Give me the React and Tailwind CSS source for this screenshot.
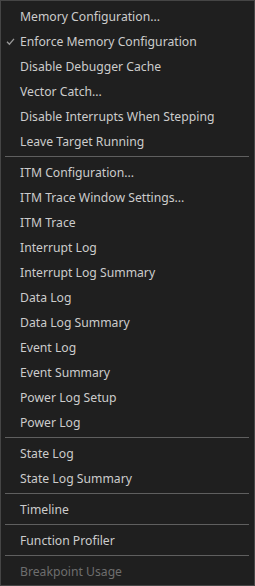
import React from "react";

const groups = [
  [
    { t: "Memory Configuration..." },
    { t: "Enforce Memory Configuration", checked: true },
    { t: "Disable Debugger Cache" },
    { t: "Vector Catch..." },
    { t: "Disable Interrupts When Stepping" },
    { t: "Leave Target Running" },
  ],
  [
    { t: "ITM Configuration..." },
    { t: "ITM Trace Window Settings..." },
    { t: "ITM Trace" },
    { t: "Interrupt Log" },
    { t: "Interrupt Log Summary" },
    { t: "Data Log" },
    { t: "Data Log Summary" },
    { t: "Event Log" },
    { t: "Event Summary" },
    { t: "Power Log Setup" },
    { t: "Power Log" },
  ],
  [{ t: "State Log" }, { t: "State Log Summary" }],
  [{ t: "Timeline" }],
  [{ t: "Function Profiler" }],
  [{ t: "Breakpoint Usage", disabled: true }],
];

function Item({ t, checked, disabled }) {
  return (
    <div className="relative flex h-[25px] items-center pl-[19px]">
      {checked && (
        <svg
          className="absolute left-[5px] top-[8px]"
          width="9"
          height="9"
          viewBox="0 0 9 9"
          fill="none"
        >
          <path d="M1 4.8 L3.4 7.2 L8 1.8" stroke="#9a9a9a" strokeWidth="1.3" />
        </svg>
      )}
      <span
        className={
          "pt-[2px] text-[12.2px] leading-none whitespace-nowrap " +
          (disabled ? "text-[#6e6e6e]" : "text-[#cccccc]")
        }
      >
        {t}
      </span>
    </div>
  );
}

export default function App() {
  return (
    <div
      className="flex h-[586px] w-[255px] flex-col border border-[#454545] bg-[#1f1f1f] pt-[3px] pb-px"
      style={{ fontFamily: '"Noto Sans", "Open Sans", sans-serif' }}
    >
      {groups.map((g, gi) => (
        <React.Fragment key={gi}>
          {gi > 0 && <div className="mt-[2px] mb-[3px] ml-[4px] mr-[5px] h-px bg-[#5f5f5f]" />}
          {g.map((it) => (
            <Item key={it.t} {...it} />
          ))}
        </React.Fragment>
      ))}
    </div>
  );
}
